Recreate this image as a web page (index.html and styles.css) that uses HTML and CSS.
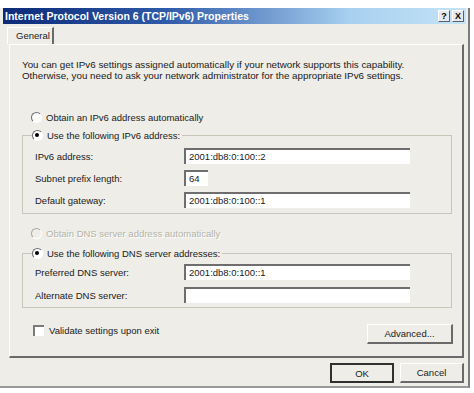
FILE: index.html
```html
<!DOCTYPE html>
<html lang="en">
<head>
  <meta charset="UTF-8" />
  <title>Internet Protocol Version 6 (TCP/IPv6) Properties</title>
  <link rel="stylesheet" href="styles.css">
</head>
<body>
  <div class="window">
    <div class="titlebar">
      <span class="title">Internet Protocol Version 6 (TCP/IPv6) Properties</span>
      <div class="caption-btns">
        <span class="cbtn">?</span>
        <span class="cbtn">X</span>
      </div>
    </div>

    <div class="tabs">
      <div class="tab">General</div>
    </div>

    <div class="panel">
      <p class="intro">You can get IPv6 settings assigned automatically if your network supports this capability.<br>Otherwise, you need to ask your network administrator for the appropriate IPv6 settings.</p>

      <div class="opt opt-ip"><span class="radio"></span>Obtain an IPv6 address automatically</div>

      <fieldset class="group group-ip">
        <legend><span class="radio checked"></span>Use the following IPv6 address:</legend>
        <div class="row"><span class="lbl">IPv6 address:</span><span class="field">2001:db8:0:100::2</span></div>
        <div class="row"><span class="lbl">Subnet prefix length:</span><span class="field short">64</span></div>
        <div class="row"><span class="lbl">Default gateway:</span><span class="field">2001:db8:0:100::1</span></div>
      </fieldset>

      <div class="opt opt-dns disabled"><span class="radio"></span>Obtain DNS server address automatically</div>

      <fieldset class="group group-dns">
        <legend><span class="radio checked"></span>Use the following DNS server addresses:</legend>
        <div class="row"><span class="lbl">Preferred DNS server:</span><span class="field">2001:db8:0:100::1</span></div>
        <div class="row row-alt"><span class="lbl">Alternate DNS server:</span><span class="field"></span></div>
      </fieldset>

      <div class="panel-foot">
        <div class="check"><span class="box"></span>Validate settings upon exit</div>
        <div class="btn btn-adv">Advanced...</div>
      </div>
    </div>

    <div class="actions">
      <div class="btn btn-default">OK</div>
      <div class="btn">Cancel</div>
    </div>
  </div>
</body>
</html>
```

FILE: styles.css
```css
body {
  margin: 0;
  padding: 8px 0 0 0;
  background: #ffffff;
  font-family: 'Liberation Sans', Arial, sans-serif;
  font-size: 9.5px;
  color: #1a1a1a;
}

.window {
  width: 470px;
  height: 380px;
  background: #eeede7;
  border-right: 2px solid #7c7c7c;
  border-bottom: 2px solid #9a9a9a;
  box-sizing: border-box;
}

.titlebar {
  height: 16px;
  margin: 0 2px 0 3px;
  background: linear-gradient(to right, #0c2a78 0%, #2e5aa8 35%, #a8d0f0 75%, #c4e4f6 100%);
  display: flex;
  align-items: center;
  justify-content: space-between;
}

.title {
  color: #fff;
  font-weight: bold;
  font-size: 10.5px;
  padding-left: 2px;
  white-space: nowrap;
}

.caption-btns {
  display: flex;
  gap: 2px;
  margin-right: 2px;
}

.cbtn {
  width: 12px;
  height: 12px;
  background: #e6e8ee;
  border-top: 1px solid #fff;
  border-left: 1px solid #fff;
  border-right: 1px solid #5a6070;
  border-bottom: 1px solid #5a6070;
  box-sizing: border-box;
  font-weight: bold;
  font-size: 9px;
  line-height: 10px;
  text-align: center;
  color: #000;
}

.tabs {
  display: flex;
  margin-top: 3px;
  padding-left: 7px;
}

.tab {
  width: 47px;
  height: 17px;
  box-sizing: border-box;
  border-top: 1px solid #fff;
  border-left: 1px solid #fff;
  border-right: 2px solid #6a6a6a;
  padding-left: 8px;
  line-height: 16px;
}

.panel {
  margin-left: 9px;
  width: 455px;
  height: 314px;
  box-sizing: border-box;
  border-top: 1px solid #fff;
  border-left: 1px solid #fff;
  border-right: 2px solid #6a6a6a;
  border-bottom: 2px solid #6a6a6a;
  padding: 14px 9px 0 12px;
}

.intro {
  margin: 0;
  font-size: 9.8px;
  line-height: 11px;
  white-space: nowrap;
}

.opt {
  display: flex;
  align-items: center;
  height: 16px;
  padding-left: 9px;
}

.opt-ip {
  margin-top: 28px;
}

.opt-dns {
  margin-top: 11px;
}

.opt.disabled {
  color: #b4b2a6;
  text-shadow: 1px 1px 0 #fff;
}

.radio {
  display: inline-block;
  width: 11px;
  height: 11px;
  box-sizing: border-box;
  border-radius: 50%;
  border-top: 1px solid #6c6c6c;
  border-left: 1px solid #6c6c6c;
  border-right: 1px solid #fff;
  border-bottom: 1px solid #fff;
  background: #fff;
  margin-right: 4px;
  position: relative;
  flex: none;
}

.disabled .radio {
  background: #eeede7;
  border-top-color: #a8a8a0;
  border-left-color: #a8a8a0;
}

.radio.checked::after {
  content: '';
  position: absolute;
  left: 2px;
  top: 2px;
  width: 4px;
  height: 4px;
  border-radius: 50%;
  background: #000;
}

.group {
  margin: 2px 0 0 0;
  width: 430px;
  box-sizing: border-box;
  border: 1px solid #c8c6b8;
  padding: 2px 0 2px 12px;
}

.group-dns {
  margin-top: 4px;
  padding-top: 0;
  padding-bottom: 1px;
}

.group legend {
  display: flex;
  align-items: center;
  height: 16px;
  padding: 0 2px 0 0;
  margin-left: -3px;
}

.row {
  display: flex;
  align-items: center;
  height: 22px;
}

.row-alt {
  margin-top: 1px;
}

.lbl {
  width: 149px;
  flex: none;
}

.field {
  width: 226px;
  height: 16px;
  box-sizing: border-box;
  background: #fff;
  border-top: 2px solid #6e6e6e;
  border-left: 2px solid #6e6e6e;
  padding-left: 3px;
  line-height: 13px;
}

.field.short {
  width: 24px;
}

.panel-foot {
  display: flex;
  justify-content: space-between;
  align-items: flex-start;
  margin-top: 16px;
}

.check {
  display: flex;
  align-items: center;
  height: 13px;
  padding-left: 11px;
}

.box {
  width: 11px;
  height: 11px;
  box-sizing: border-box;
  border-top: 2px solid #7a7a7a;
  border-left: 2px solid #7a7a7a;
  background: #fff;
  margin-right: 5px;
}

.btn {
  width: 64px;
  height: 20px;
  box-sizing: border-box;
  border-top: 1px solid #fff;
  border-left: 1px solid #fff;
  border-right: 2px solid #6a6a6a;
  border-bottom: 2px solid #6a6a6a;
  background: #eeede7;
  display: flex;
  align-items: center;
  justify-content: center;
}

.btn-adv {
  width: 86px;
}

.btn-default {
  border: 2px solid #303030;
}

.actions {
  display: flex;
  justify-content: flex-end;
  gap: 6px;
  margin-top: 5px;
  padding-right: 4px;
}
```
